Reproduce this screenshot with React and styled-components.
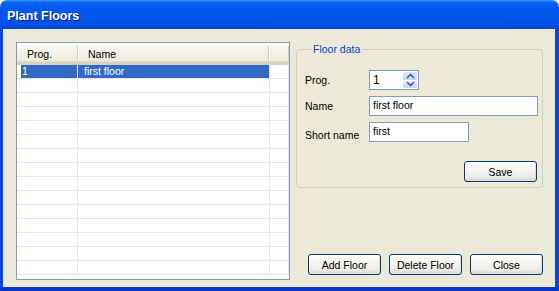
import React from "react";
import styled, { createGlobalStyle } from "styled-components";

// finestra "Plant Floors" in stile Windows XP

const GlobalStyle = createGlobalStyle`
  html, body {
    margin: 0;
    padding: 0;
    background: #ffffff;
  }
  * {
    box-sizing: border-box;
  }
`;

const rows = [{ prog: "1", name: "first floor" }];
const ROW_COUNT = 15;

function App() {
  const filled = Array.from({ length: ROW_COUNT }, (_, i) => rows[i] || null);

  return (
    <>
      <GlobalStyle />
      <Window>
        <TitleBar>
          <Title>Plant Floors</Title>
        </TitleBar>
        <Body>
          <ListView>
            <Header>
              <HeadCell $width={61}>Prog.</HeadCell>
              <HeadCell $width={191}>Name</HeadCell>
              <HeadCell />
            </Header>
            {filled.map((row, i) => (
              <Row key={i}>
                <Cell $width={61} $first>
                  {row && <Selection $first>{row.prog}</Selection>}
                </Cell>
                <Cell $width={192}>
                  {row && <Selection>{row.name}</Selection>}
                </Cell>
                <Cell />
              </Row>
            ))}
          </ListView>

          <RightColumn>
            <GroupBox>
              <Legend>Floor data</Legend>
              <FieldRow>
                <Label>Prog.</Label>
                <Spinner>
                  <SpinValue>1</SpinValue>
                  <SpinButtons>
                    <SpinHalf>
                      <svg width="9" height="6" viewBox="0 0 9 6">
                        <path d="M1 5 L4.5 1.5 L8 5" fill="none" stroke="#4d6185" strokeWidth="1.6" />
                      </svg>
                    </SpinHalf>
                    <SpinHalf>
                      <svg width="9" height="6" viewBox="0 0 9 6">
                        <path d="M1 1 L4.5 4.5 L8 1" fill="none" stroke="#4d6185" strokeWidth="1.6" />
                      </svg>
                    </SpinHalf>
                  </SpinButtons>
                </Spinner>
              </FieldRow>
              <FieldRow>
                <Label>Name</Label>
                <TextBox $grow>first floor</TextBox>
              </FieldRow>
              <FieldRow>
                <Label $shift>Short name</Label>
                <TextBox $width={100}>first</TextBox>
              </FieldRow>
              <SaveRow>
                <Button>Save</Button>
              </SaveRow>
            </GroupBox>

            <ButtonBar>
              <Button>Add Floor</Button>
              <Button>Delete Floor</Button>
              <Button>Close</Button>
            </ButtonBar>
          </RightColumn>
        </Body>
      </Window>
    </>
  );
}

export default App;

const Window = styled.div`
  width: 559px;
  height: 291px;
  display: flex;
  flex-direction: column;
  font-family: "Liberation Sans", Arial, sans-serif;
  font-size: 10.5px;
  color: #000;
`;

const TitleBar = styled.div`
  height: 29px;
  flex: none;
  display: flex;
  align-items: center;
  padding: 0 0 0 7px;
  border-radius: 7px 7px 0 0;
  background: linear-gradient(
    180deg,
    #3d95ff 0%,
    #0a66f5 8%,
    #0058ee 30%,
    #0055ea 60%,
    #0050e4 85%,
    #0043d2 100%
  );
`;

const Title = styled.div`
  color: #fff;
  font-weight: bold;
  font-size: 12.5px;
  text-shadow: 1px 1px 0 #0a1e8a;
  margin-top: 2px;
`;

const Body = styled.div`
  flex: 1;
  display: flex;
  gap: 6px;
  background: #ece9d8;
  border-left: 3px solid #0845dc;
  border-right: 4px solid #0845dc;
  border-bottom: 4px solid #0735c8;
  padding: 13px 12px 7px 13px;
`;

const ListView = styled.div`
  width: 274px;
  flex: none;
  background: #fff;
  border: 1px solid #7f9db9;
  overflow: hidden;
`;

const Header = styled.div`
  height: 22px;
  display: flex;
  background: linear-gradient(180deg, #fbfbf9 0%, #f1efe2 60%, #ebeadb 100%);
  border-bottom: 3px solid #d6d2c2;
  box-shadow: inset 0 -1px 0 #e2ded0;
`;

const HeadCell = styled.div`
  width: ${(p) => (p.$width ? `${p.$width}px` : "auto")};
  flex: ${(p) => (p.$width ? "none" : "1")};
  display: flex;
  align-items: center;
  padding: 0 0 0 10px;
  border-right: 1px solid #d0cdbd;
  box-shadow: 1px 0 0 #ffffff;
  margin: 3px 0 1px;
  color: #000;
`;

const Row = styled.div`
  height: 14px;
  display: flex;
  border-bottom: 1px solid #e8e6e0;
`;

const Cell = styled.div`
  width: ${(p) => (p.$width ? `${p.$width}px` : "auto")};
  flex: ${(p) => (p.$width ? "none" : "1")};
  border-right: 1px solid #e8e6e0;
  padding-left: ${(p) => (p.$first ? "4px" : "0")};
  display: flex;
`;

const Selection = styled.div`
  flex: 1;
  background: #316ac5;
  color: #fff;
  line-height: 13px;
  padding-left: ${(p) => (p.$first ? "1px" : "6px")};
  white-space: nowrap;
`;

const RightColumn = styled.div`
  flex: 1;
  display: flex;
  flex-direction: column;
  justify-content: space-between;
`;

const GroupBox = styled.fieldset`
  margin: 1px 0 0;
  padding: 14px 4px 5px 8px;
  border: 1px solid #d0d0bf;
  border-radius: 4px;
  display: flex;
  flex-direction: column;
  gap: 6px;
  min-width: 0;
`;

const Legend = styled.legend`
  color: #0046d5;
  padding: 0 2px;
  margin-left: 6px;
  line-height: 13px;
`;

const FieldRow = styled.div`
  display: flex;
  align-items: center;
  height: 20px;
`;

const Label = styled.div`
  width: 64px;
  flex: none;
  margin-top: ${(p) => (p.$shift ? "6px" : "0")};
`;

const TextBox = styled.div`
  height: 20px;
  width: ${(p) => (p.$width ? `${p.$width}px` : "auto")};
  flex: ${(p) => (p.$grow ? "1" : "none")};
  background: #fff;
  border: 1px solid #7f9db9;
  padding: 0 3px;
  line-height: 16px;
  white-space: nowrap;
`;

const Spinner = styled.div`
  width: 50px;
  height: 20px;
  display: flex;
  background: #fff;
  border: 1px solid #7f9db9;
  padding: 1px;
`;

const SpinValue = styled.div`
  flex: 1;
  font-size: 12px;
  line-height: 16px;
  padding-left: 2px;
`;

const SpinButtons = styled.div`
  width: 14px;
  display: flex;
  flex-direction: column;
  gap: 1px;
`;

const SpinHalf = styled.div`
  flex: 1;
  display: flex;
  align-items: center;
  justify-content: center;
  background: linear-gradient(180deg, #dce8fd 0%, #c4d5fb 100%);
  border-radius: 1px;
`;

const SaveRow = styled.div`
  display: flex;
  justify-content: flex-end;
  padding: 13px 1px 0 0;
`;

const Button = styled.button`
  width: 73px;
  height: 21px;
  padding: 0;
  font-family: "Liberation Sans", Arial, sans-serif;
  font-size: 10.5px;
  color: #000;
  border: 1px solid #003c74;
  border-radius: 3px;
  background: linear-gradient(180deg, #ffffff 0%, #f5f4ef 45%, #ecebe5 80%, #d6d0c5 100%);
  box-shadow: inset -1px -1px 0 #e3e0d3;
`;

const ButtonBar = styled.div`
  display: flex;
  gap: 8px;
  padding: 0 0 5px 12px;
`;
